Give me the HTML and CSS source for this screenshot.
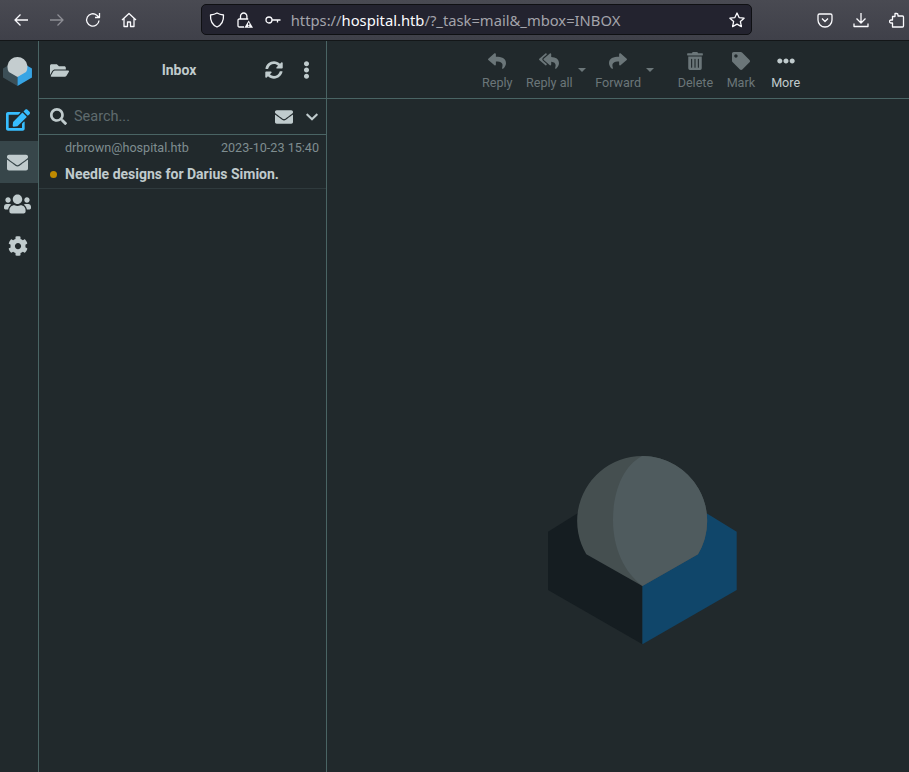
FILE: index.html
```html
<!DOCTYPE html>
<html lang="en">
<head>
    <meta charset="UTF-8">
    <meta name="viewport" content="width=device-width, initial-scale=1.0">
    <title>Hospital Webmail :: Inbox</title>
    <link rel="stylesheet" href="styles.css">
</head>
<body>
    <header class="browser-bar">
        <div class="nav-buttons">
            <svg class="chrome-icon" viewBox="0 0 16 16"><path d="M15 8H2M7.5 2.5 2 8l5.5 5.5"/></svg>
            <svg class="chrome-icon disabled" viewBox="0 0 16 16"><path d="M1 8h13M8.500 2.500 14 8l-5.500 5.500"/></svg>
            <svg class="chrome-icon" viewBox="0 0 16 16"><path d="M14 8.500A6.200 6.200 0 1 1 11.800 3.200L14 5.200M14.500 1v4.500H10"/></svg>
            <svg class="chrome-icon" viewBox="0 0 16 16"><path d="M1 8 8 1.500 15 8M3 6.500V14.500H6.500V10h3v4.500H13V6.500"/></svg>
        </div>
        <div class="url-bar">
            <svg class="chrome-icon" viewBox="0 0 16 16"><path d="M8 1c2 1.200 4 1.700 6.500 2 .3 5.500-1.500 9.800-6.500 12C3 12.800 1.200 8.500 1.500 3 4 2.700 6 2.200 8 1z"/></svg>
            <svg class="chrome-icon lock" viewBox="0 0 16 16">
                <path d="M3.500 7V4.200a3.200 3.200 0 0 1 6.400 0V7M7 15H2.200A1.200 1.200 0 0 1 1 13.800V8.200A1.200 1.200 0 0 1 2.200 7h9"/>
                <path class="warn" d="M11.700 8.500 16 15.800H7.400z"/>
                <path class="warn-mark" d="M11.700 10.800v2.400M11.700 14v.8"/>
            </svg>
            <svg class="chrome-icon" viewBox="0 0 16 16"><circle cx="4" cy="8" r="3"/><path d="M7 8h8.500M12.500 8v2.500"/></svg>
            <div class="url-text">https://<span class="url-host">hospital.htb</span>/?_task=mail&amp;_mbox=INBOX</div>
            <svg class="chrome-icon star" viewBox="0 0 16 16"><path d="m8 1 2.100 4.600 5 .6-3.700 3.400 1 5L8 12.100 3.600 14.600l1-5L.9 6.200l5-.6z"/></svg>
        </div>
        <div class="addon-buttons">
            <svg class="chrome-icon" viewBox="0 0 16 16"><path d="M2.500 2h11A1.500 1.500 0 0 1 15 3.500V8A7 7 0 0 1 1 8V3.500A1.500 1.500 0 0 1 2.500 2zM5 6.500 8 9.500l3-3"/></svg>
            <svg class="chrome-icon" viewBox="0 0 16 16"><path d="M8 1v10M3.500 6.500 8 11l4.500-4.500M1 11.500V14.500H15V11.500"/></svg>
            <svg class="chrome-icon" viewBox="0 0 16 16"><path d="M6 1.500h1.500a1.500 1.500 0 0 1 1.500 1.500v1h4.500a1 1 0 0 1 1 1V14a1 1 0 0 1-1 1H3.500V11H2A1.500 1.500 0 0 1 .5 9.500 1.500 1.500 0 0 1 2 8h1.500V4.500H6V3z"/></svg>
        </div>
    </header>

    <div class="app">
        <nav class="taskmenu">
            <div class="small-logo">
                <svg viewBox="0 0 189 189">
                    <path class="logo-left" d="M0 75.700 38 52 94.400 130V188.300L0 134z"/>
                    <path class="logo-right" d="M188.700 75.700 150 52 94.400 130V188.300L188.700 134z"/>
                    <path class="logo-ball" d="M94.400 130 150 98.300A65 65 0 1 0 38.300 98.300z"/>
                </svg>
            </div>
            <a class="task-btn compose">
                <svg viewBox="0 0 576 512"><path d="M402.600 83.200l90.200 90.200c3.800 3.800 3.800 10 0 13.800L274.400 405.600l-92.800 10.300c-12.400 1.400-22.900-9.100-21.500-21.500l10.300-92.800L388.800 83.200c3.800-3.800 10-3.800 13.800 0zm162-22.900l-48.800-48.800c-15.200-15.200-39.900-15.200-55.200 0l-35.400 35.400c-3.800 3.800-3.800 10 0 13.800l90.200 90.200c3.800 3.800 10 3.800 13.800 0l35.400-35.400c15.200-15.300 15.200-40 0-55.200zM384 346.200V448H64V128h229.800c3.200 0 6.200-1.300 8.500-3.500l40-40c7.600-7.600 2.200-20.500-8.500-20.500H48C21.500 64 0 85.500 0 112v352c0 26.500 21.500 48 48 48h352c26.500 0 48-21.500 48-48V306.200c0-10.700-12.900-16-20.500-8.500l-40 40c-2.200 2.300-3.500 5.300-3.500 8.500z"/></svg>
            </a>
            <a class="task-btn selected">
                <svg viewBox="0 0 512 512"><path d="M502.300 190.800c3.900-3.100 9.700-.2 9.700 4.700V400c0 26.500-21.500 48-48 48H48c-26.500 0-48-21.500-48-48V195.600c0-5 5.700-7.800 9.700-4.700 22.400 17.400 52.100 39.500 154.100 113.600 21.100 15.400 56.700 47.800 92.200 47.600 35.700.3 72-32.800 92.300-47.600 102-74.100 131.600-96.300 154-113.700zM256 320c23.200.4 56.600-29.200 73.400-41.400 132.700-96.300 142.800-104.700 173.400-128.700 5.800-4.500 9.200-11.500 9.200-18.900v-19c0-26.500-21.500-48-48-48H48C21.500 64 0 85.500 0 112v19c0 7.400 3.400 14.300 9.200 18.900 30.600 23.900 40.700 32.400 173.400 128.700 16.800 12.200 50.200 41.800 73.400 41.400z"/></svg>
            </a>
            <a class="task-btn contacts">
                <svg viewBox="0 0 640 512"><path d="M96 224c35.300 0 64-28.700 64-64s-28.700-64-64-64-64 28.700-64 64 28.700 64 64 64zm448 0c35.300 0 64-28.700 64-64s-28.700-64-64-64-64 28.700-64 64 28.700 64 64 64zm32 32h-64c-17.600 0-33.500 7.100-45.100 18.600 40.300 22.100 68.900 62 75.100 109.400h66c17.700 0 32-14.300 32-32v-32c0-35.300-28.700-64-64-64zm-256 0c61.900 0 112-50.100 112-112S381.900 32 320 32 208 82.100 208 144s50.100 112 112 112zm76.800 32h-8.300c-20.800 10-43.900 16-68.500 16s-47.600-6-68.500-16h-8.300C179.600 288 128 339.600 128 403.200V432c0 26.500 21.500 48 48 48h288c26.500 0 48-21.500 48-48v-28.800c0-63.600-51.600-115.200-115.200-115.200zm-223.700-13.400C161.500 263.100 145.600 256 128 256H64c-35.300 0-64 28.700-64 64v32c0 17.700 14.300 32 32 32h65.900c6.300-47.400 34.900-87.300 75.200-109.400z"/></svg>
            </a>
            <a class="task-btn settings">
                <svg viewBox="0 0 512 512"><path d="M487.400 315.700l-42.600-24.600c4.300-23.200 4.300-47 0-70.200l42.600-24.600c4.900-2.800 7.100-8.600 5.500-14-11.100-35.600-30-67.800-54.700-94.600-3.800-4.100-10-5.100-14.800-2.300L380.800 110c-17.900-15.400-38.500-27.300-60.800-35.100V25.800c0-5.600-3.900-10.500-9.400-11.700-36.700-8.200-74.300-7.800-109.200 0-5.500 1.200-9.400 6.100-9.400 11.700V75c-22.200 7.900-42.800 19.800-60.800 35.100L88.700 85.500c-4.900-2.800-11-1.900-14.800 2.300-24.700 26.700-43.600 58.900-54.700 94.600-1.700 5.400.6 11.200 5.500 14L67.300 221c-4.300 23.200-4.300 47 0 70.200l-42.600 24.600c-4.900 2.800-7.100 8.600-5.500 14 11.100 35.600 30 67.800 54.700 94.600 3.800 4.100 10 5.100 14.800 2.300l42.600-24.600c17.900 15.400 38.500 27.300 60.800 35.100v49.200c0 5.600 3.900 10.500 9.400 11.700 36.700 8.200 74.300 7.800 109.200 0 5.500-1.200 9.400-6.100 9.400-11.700v-49.200c22.200-7.900 42.800-19.800 60.800-35.100l42.600 24.600c4.900 2.800 11 1.900 14.800-2.300 24.700-26.700 43.600-58.900 54.700-94.600 1.500-5.500-.7-11.300-5.600-14.100zM256 336c-44.100 0-80-35.900-80-80s35.900-80 80-80 80 35.900 80 80-35.900 80-80 80z"/></svg>
            </a>
        </nav>

        <section class="list-pane">
            <div class="list-header">
                <svg class="folder-icon" viewBox="0 0 576 512"><path d="M572.694 292.093L500.270 416.248A63.997 63.997 0 0 1 444.989 448H45.025c-18.523 0-30.064-20.093-20.731-36.093l72.424-124.155A64 64 0 0 1 152 256h399.964c18.523 0 30.064 20.093 20.730 36.093zM152 224h328v-48c0-26.510-21.490-48-48-48H272l-64-64H48C21.490 64 0 85.490 0 112v278.046l69.077-118.418C86.214 242.250 117.989 224 152 224z"/></svg>
                <h1 class="list-title">Inbox</h1>
                <svg class="sync-icon" viewBox="0 0 512 512"><path d="M370.720 133.280C339.458 104.008 298.888 87.962 255.848 88c-77.458.068-144.328 53.178-162.791 126.850-1.344 5.363-6.122 9.150-11.651 9.150H24.103c-7.498 0-13.194-6.807-11.807-14.176C33.933 94.924 134.813 8 256 8c66.448 0 126.791 26.136 171.315 68.685L463.030 40.970C478.149 25.851 504 36.559 504 57.941V192c0 13.255-10.745 24-24 24H345.941c-21.382 0-32.090-25.851-16.971-40.971l41.750-41.749zM32 296h134.059c21.382 0 32.090 25.851 16.971 40.971l-41.750 41.750c31.262 29.273 71.835 45.319 114.876 45.280 77.418-.07 144.315-53.144 162.787-126.849 1.344-5.363 6.122-9.150 11.651-9.150h57.304c7.498 0 13.194 6.807 11.807 14.176C478.067 417.076 377.187 504 256 504c-66.448 0-126.791-26.136-171.315-68.685L48.970 471.030C33.851 486.149 8 475.441 8 454.059V320c0-13.255 10.745-24 24-24z"/></svg>
                <svg class="menu-icon" viewBox="0 0 192 512"><path d="M96 184c39.800 0 72 32.200 72 72s-32.200 72-72 72-72-32.200-72-72 32.200-72 72-72zM24 80c0 39.800 32.200 72 72 72s72-32.200 72-72S135.800 8 96 8 24 40.200 24 80zm0 352c0 39.800 32.200 72 72 72s72-32.200 72-72-32.200-72-72-72-72 32.200-72 72z"/></svg>
            </div>
            <div class="search-row">
                <svg class="search-icon" viewBox="0 0 512 512"><path d="M505 442.700L405.300 343c-4.500-4.500-10.600-7-17-7H372c27.600-35.300 44-79.700 44-128C416 93.100 322.900 0 208 0S0 93.100 0 208s93.100 208 208 208c48.300 0 92.700-16.400 128-44v16.300c0 6.400 2.500 12.500 7 17l99.700 99.700c9.400 9.400 24.600 9.400 33.900 0l28.300-28.300c9.400-9.400 9.400-24.600.1-34zM208 336c-70.700 0-128-57.200-128-128 0-70.700 57.200-128 128-128 70.700 0 128 57.200 128 128 0 70.700-57.200 128-128 128z"/></svg>
                <span class="search-placeholder">Search...</span>
                <svg class="filter-icon" viewBox="0 0 512 512"><path d="M502.300 190.800c3.900-3.100 9.700-.2 9.700 4.700V400c0 26.500-21.500 48-48 48H48c-26.500 0-48-21.500-48-48V195.600c0-5 5.700-7.800 9.700-4.700 22.400 17.400 52.100 39.500 154.100 113.600 21.100 15.400 56.700 47.800 92.200 47.600 35.700.3 72-32.800 92.300-47.600 102-74.100 131.600-96.300 154-113.700zM256 320c23.200.4 56.600-29.200 73.400-41.400 132.700-96.300 142.800-104.700 173.400-128.700 5.800-4.500 9.200-11.500 9.200-18.900v-19c0-26.500-21.500-48-48-48H48C21.500 64 0 85.500 0 112v19c0 7.400 3.400 14.300 9.200 18.900 30.600 23.900 40.700 32.400 173.400 128.700 16.800 12.200 50.200 41.800 73.400 41.400z"/></svg>
                <svg class="chevron-icon" viewBox="0 0 448 512"><path d="M207.029 381.476L12.686 187.132c-9.373-9.373-9.373-24.569 0-33.941l22.667-22.667c9.357-9.357 24.522-9.375 33.901-.04L224 284.505l154.745-154.021c9.379-9.335 24.544-9.317 33.901.04l22.667 22.667c9.373 9.373 9.373 24.569 0 33.941L240.971 381.476c-9.373 9.372-24.569 9.372-33.942 0z"/></svg>
            </div>
            <div class="message-row">
                <div class="message-meta">
                    <span>drbrown@hospital.htb</span>
                    <span>2023-10-23 15:40</span>
                </div>
                <div class="message-subject">
                    <span class="unread-dot"></span>
                    <span>Needle designs for Darius Simion.</span>
                </div>
            </div>
        </section>

        <main class="content-pane">
            <div class="toolbar">
                <a class="tool-btn">
                    <svg viewBox="0 0 512 512"><path d="M8.309 189.836L184.313 37.851C199.719 24.546 224 35.347 224 56.015v80.053c160.629 1.839 288 34.032 288 186.258 0 61.441-39.581 122.309-83.333 154.132-13.653 9.931-33.111-2.533-28.077-18.631 45.344-145.012-21.507-183.510-176.590-185.742V360c0 20.700-24.300 31.453-39.687 18.164l-176.004-152c-11.071-9.562-11.086-26.753 0-36.328z"/></svg>
                    <span>Reply</span>
                </a>
                <a class="tool-btn has-drop">
                    <svg viewBox="0 0 576 512"><path d="M136.309 189.836L312.313 37.851C327.720 24.546 352 35.348 352 56.015v82.763c129.182 10.231 224 52.212 224 183.548 0 61.441-39.582 122.309-83.333 154.132-13.653 9.931-33.111-2.533-28.077-18.631 38.512-123.162-3.922-169.482-112.590-182.015v84.175c0 20.701-24.300 31.453-39.687 18.164l-176.004-152c-11.071-9.561-11.086-26.753 0-36.316zm-128 36.328L184.313 378.150C199.700 391.439 224 380.687 224 359.986v-15.818l-108.606-93.785A55.960 55.960 0 0 1 96 207.998a55.953 55.953 0 0 1 19.393-42.380L224 71.832V56.015c0-20.667-24.280-31.469-39.687-18.164L8.309 189.836c-11.086 9.575-11.071 26.767 0 36.328z"/></svg>
                    <span>Reply all</span>
                </a>
                <a class="tool-btn has-drop">
                    <svg viewBox="0 0 512 512"><path d="M503.691 189.836L327.687 37.851C312.281 24.546 288 35.347 288 56.015v80.053C127.371 137.907 0 170.100 0 322.326c0 61.441 39.581 122.309 83.333 154.132 13.653 9.931 33.111-2.533 28.077-18.631C66.066 312.814 132.917 274.316 288 272.085V360c0 20.700 24.300 31.453 39.687 18.164l176.004-152c11.071-9.562 11.086-26.753 0-36.328z"/></svg>
                    <span>Forward</span>
                </a>
                <a class="tool-btn">
                    <svg viewBox="0 0 448 512"><path d="M32 464a48 48 0 0 0 48 48h288a48 48 0 0 0 48-48V128H32zm272-256a16 16 0 0 1 32 0v224a16 16 0 0 1-32 0zm-96 0a16 16 0 0 1 32 0v224a16 16 0 0 1-32 0zm-96 0a16 16 0 0 1 32 0v224a16 16 0 0 1-32 0zM432 32H312l-9.400-18.700A24 24 0 0 0 281.100 0H166.800a23.720 23.720 0 0 0-21.400 13.300L136 32H16A16 16 0 0 0 0 48v32a16 16 0 0 0 16 16h416a16 16 0 0 0 16-16V48a16 16 0 0 0-16-16z"/></svg>
                    <span>Delete</span>
                </a>
                <a class="tool-btn">
                    <svg viewBox="0 0 512 512"><path d="M0 252.118V48C0 21.490 21.490 0 48 0h204.118a48 48 0 0 1 33.941 14.059l211.882 211.882c18.745 18.745 18.745 49.137 0 67.882L293.823 497.941c-18.745 18.745-49.137 18.745-67.882 0L14.059 286.059A48 48 0 0 1 0 252.118zM112 64c-26.510 0-48 21.490-48 48s21.490 48 48 48 48-21.490 48-48-21.490-48-48-48z"/></svg>
                    <span>Mark</span>
                </a>
                <a class="tool-btn active">
                    <svg viewBox="0 0 512 512"><path d="M328 256c0 39.800-32.200 72-72 72s-72-32.200-72-72 32.200-72 72-72 72 32.200 72 72zm104-72c-39.800 0-72 32.200-72 72s32.200 72 72 72 72-32.200 72-72-32.200-72-72-72zm-352 0c-39.800 0-72 32.200-72 72s32.200 72 72 72 72-32.200 72-72-32.200-72-72-72z"/></svg>
                    <span>More</span>
                </a>
            </div>
            <div class="watermark">
                <svg viewBox="0 0 189 189">
                    <path class="wm-left" d="M0 75.700 38 52 94.400 130V188.300L0 134z"/>
                    <path class="wm-right" d="M188.700 75.700 150 52 94.400 130V188.300L188.700 134z"/>
                    <path class="wm-ball" d="M94.400 130 150 98.300A65 65 0 1 0 38.300 98.300z"/>
                    <path class="wm-ball-light" d="M94.400 0C74 10 65 38 65 64 65 92 76 116 94.400 130L150 98.300A65 65 0 0 0 94.400 0z"/>
                </svg>
            </div>
        </main>
    </div>
</body>
</html>
```

FILE: styles.css
```css
* {
    box-sizing: border-box;
}

html, body {
    height: 100%;
}

body {
    margin: 0;
    display: flex;
    flex-direction: column;
    background: #21292c;
    font-family: Roboto, "Liberation Sans", sans-serif;
    overflow: hidden;
}

/* browser chrome */
.browser-bar {
    flex: none;
    height: 41px;
    display: flex;
    align-items: center;
    padding: 0 4px 1px 13px;
    background: linear-gradient(#494a52, #3f4049);
    border-bottom: 1px solid #131618;
}

.chrome-icon {
    flex: none;
    width: 16px;
    height: 16px;
    fill: none;
    stroke: #fbfbfe;
    stroke-width: 1.3;
    stroke-linejoin: round;
}

.chrome-icon.disabled {
    opacity: 0.4;
}

.chrome-icon .warn {
    fill: #fbfbfe;
    stroke: none;
}

.chrome-icon .warn-mark {
    stroke: #23232f;
    stroke-width: 1.2;
}

.nav-buttons {
    display: flex;
    gap: 20px;
    width: 188px;
}

.url-bar {
    width: 552px;
    height: 31px;
    display: flex;
    align-items: center;
    gap: 12px;
    padding: 0 6px 0 7px;
    background: #23232f;
    border: 1px solid #0f1013;
    border-radius: 5px;
}

.url-text {
    flex: 1;
    margin-left: -2px;
    color: #a3a4ab;
    font-family: "Noto Sans", sans-serif;
    font-size: 14.75px;
    white-space: nowrap;
}

.url-host {
    color: #fbfbfe;
}

.addon-buttons {
    display: flex;
    gap: 20px;
    margin-left: 65px;
}

/* app layout */
.app {
    flex: 1;
    display: flex;
    min-height: 0;
}

.taskmenu {
    flex: none;
    width: 39px;
    display: flex;
    flex-direction: column;
    border-right: 1px solid #4a6464;
}

.small-logo {
    height: 58px;
    padding: 16px 0 0 3px;
}

.small-logo svg {
    display: block;
    width: 29px;
    height: 29px;
}

.logo-left {
    fill: #3c4f57;
}

.logo-right {
    fill: #37a4e4;
}

.logo-ball {
    fill: #c4cdcf;
}

.task-btn {
    height: 42px;
    display: flex;
    align-items: center;
    justify-content: center;
    padding-right: 3px;
    fill: #c0cbcd;
}

.task-btn svg {
    width: 21px;
    height: 21px;
}

.task-btn.selected {
    background: #37464a;
}

.task-btn.compose {
    fill: #37beff;
}

.task-btn.compose svg {
    width: 24px;
    height: 22px;
}

.task-btn.contacts svg {
    width: 27px;
    height: 22px;
}

.task-btn.settings svg {
    width: 20px;
    height: 20px;
}

/* message list */
.list-pane {
    flex: none;
    width: 288px;
    display: flex;
    flex-direction: column;
    border-right: 1px solid #4a6464;
}

.list-header {
    height: 58px;
    display: flex;
    align-items: center;
    padding: 1px 16px 0 11px;
    border-bottom: 1px solid #4a6464;
    fill: #c0cbcd;
}

.folder-icon {
    width: 19px;
    height: 17px;
}

.list-title {
    flex: 1;
    margin: 0;
    padding-left: 24px;
    color: #c0cbcd;
    font-size: 14px;
    font-weight: 700;
    text-align: center;
}

.sync-icon {
    width: 18px;
    height: 18px;
}

.menu-icon {
    width: 7px;
    height: 18px;
    margin-left: 20px;
}

.search-row {
    height: 36px;
    display: flex;
    align-items: center;
    padding: 0 8px 0 11px;
    border-bottom: 1px solid #4a6464;
    fill: #c0cbcd;
}

.search-icon {
    width: 17px;
    height: 17px;
}

.search-placeholder {
    flex: 1;
    margin-left: 7px;
    color: #5f6b6e;
    font-size: 14.5px;
}

.filter-icon {
    width: 18px;
    height: 18px;
}

.chevron-icon {
    width: 12px;
    height: 14px;
    margin-left: 13px;
}

.message-row {
    height: 54px;
    padding: 5px 7px 0 26px;
    border-bottom: 1px solid #2f3a3d;
}

.message-meta {
    display: flex;
    justify-content: space-between;
    color: #7f8d90;
    font-size: 12.6px;
    line-height: 16px;
}

.message-subject {
    position: relative;
    margin-top: 10px;
    color: #c0cbcd;
    font-size: 14px;
    font-weight: 700;
    line-height: 17px;
}

.unread-dot {
    position: absolute;
    left: -15px;
    top: 5px;
    width: 7px;
    height: 7px;
    border-radius: 50%;
    background: #c08a00;
}

/* content */
.content-pane {
    flex: 1;
    min-width: 0;
    display: flex;
    flex-direction: column;
}

.toolbar {
    flex: none;
    height: 58px;
    display: flex;
    gap: 13.5px;
    padding: 11px 0 0 155px;
    border-bottom: 1px solid #4a6464;
}

.tool-btn {
    position: relative;
    display: flex;
    flex-direction: column;
    align-items: center;
    color: #6b7679;
    fill: #6b7679;
    font-size: 12.6px;
    line-height: 14px;
}

.tool-btn svg {
    width: 20px;
    height: 18px;
    margin-bottom: 6px;
}

.tool-btn.has-drop {
    margin-right: 9px;
}

.tool-btn.has-drop:nth-child(3) {
    margin-right: 23px;
}

.tool-btn.has-drop::after {
    content: "";
    position: absolute;
    right: -13px;
    top: 16px;
    border: 4px solid transparent;
    border-top: 4px solid #6b7679;
}

.tool-btn.active {
    margin-left: 2.5px;
    color: #c0cbcd;
    fill: #c0cbcd;
}

.watermark {
    flex: 1;
    padding: 357px 0 0 221px;
}

.watermark svg {
    display: block;
    width: 189px;
    height: 189px;
}

.wm-left {
    fill: #151d21;
}

.wm-right {
    fill: #10466a;
}

.wm-ball {
    fill: #454f50;
}

.wm-ball-light {
    fill: #4f5b5e;
}
```
